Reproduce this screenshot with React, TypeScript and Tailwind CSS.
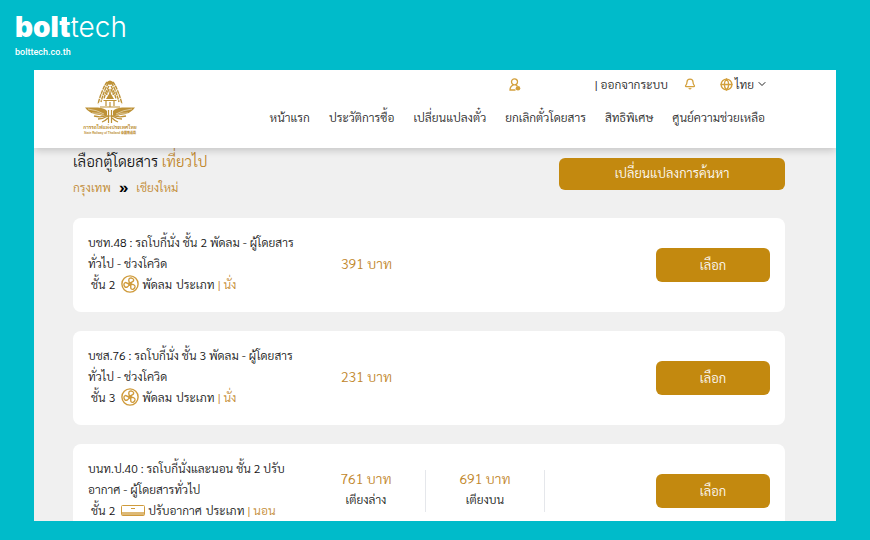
import { Bell, ChevronDown, Globe } from 'lucide-react';

type Price = { amount: string; berth?: string };

type Coach = {
  id: string;
  title: string[];
  travelClass: string;
  cooling: 'fan' | 'air';
  kind: string;
  prices: Price[];
};

const navItems = [
  'หน้าแรก',
  'ประวัติการซื้อ',
  'เปลี่ยนแปลงตั๋ว',
  'ยกเลิกตั๋วโดยสาร',
  'สิทธิพิเศษ',
  'ศูนย์ความช่วยเหลือ',
];

const coaches: Coach[] = [
  {
    id: '48',
    title: ['บชท.48 : รถโบกี้นั่ง ชั้น 2 พัดลม - ผู้โดยสาร', 'ทั่วไป - ช่วงโควิด'],
    travelClass: 'ชั้น 2',
    cooling: 'fan',
    kind: 'นั่ง',
    prices: [{ amount: '391 บาท' }],
  },
  {
    id: '76',
    title: ['บชส.76 : รถโบกี้นั่ง ชั้น 3 พัดลม - ผู้โดยสาร', 'ทั่วไป - ช่วงโควิด'],
    travelClass: 'ชั้น 3',
    cooling: 'fan',
    kind: 'นั่ง',
    prices: [{ amount: '231 บาท' }],
  },
  {
    id: '40',
    title: ['บนท.ป.40 : รถโบกี้นั่งและนอน ชั้น 2 ปรับ', 'อากาศ - ผู้โดยสารทั่วไป'],
    travelClass: 'ชั้น 2',
    cooling: 'air',
    kind: 'นอน',
    prices: [
      { amount: '761 บาท', berth: 'เตียงล่าง' },
      { amount: '691 บาท', berth: 'เตียงบน' },
    ],
  },
];

function BrandBar() {
  return (
    <div className="h-[70px] shrink-0 px-[15px] pt-[9px] text-white">
      <div className="font-['Inter',sans-serif] text-[28px] leading-[36px]">
        <span className="font-black">
          bol
          <span className="relative">
            t<span className="absolute top-[7px] left-[3px] h-[6px] w-[5px] bg-white" />
            <span className="absolute top-[7px] left-[8px] h-[5px] w-[5px] bg-[#00bbca]" />
          </span>
        </span>
        <span className="font-light">tech</span>
      </div>
      <a href="#" className="block font-['Roboto',sans-serif] text-[9px] leading-[14px] font-medium">
        bolttech.co.th
      </a>
    </div>
  );
}

function RailwayLogo() {
  return (
    <a href="#" aria-label="การรถไฟแห่งประเทศไทย" className="flex w-[58px] flex-col items-center text-[#bd9136]">
      <svg viewBox="0 0 52 44" className="h-[44px] w-[52px]" fill="none" stroke="currentColor">
        <path d="M22 3 Q26 -2 30 3 L26 5 Z" fill="currentColor" stroke="none" />
        {['', 'matrix(-1 0 0 1 52 0)'].map((flip) => (
          <g key={flip} transform={flip}>
            <path
              d="M23 2 Q18 9 14 24 M24.500 3 Q20 10 17 22 M25 6 Q21.500 12 20 19 M25 9 L22.500 15"
              strokeWidth="1.4"
              strokeDasharray="4 0.7"
            />
            <path d="M1 27.500 H14 Q21 28 23 31 V35 Q20 37 16 35 Q5 34 1 27.500Z" fill="currentColor" stroke="none" />
            <path d="M4 29 Q13 30 20 34 M8 33 Q14 32 21 36" stroke="white" strokeWidth="0.5" />
            <path d="M10 36 Q18 38 23 35 M14 39 Q19 39 24 36 M18 42 Q21 41 24 38" strokeWidth="1.3" />
          </g>
        ))}
        <path d="M26 8 L27 14 L30 19 H22 L25 14 Z" fill="currentColor" stroke="none" />
        <path d="M19.500 20.500 H32.500 M22 20 V26 M30 20 V26 M26 22 V27 M16 27 H36" strokeWidth="1.2" />
        <path d="M24.500 30 V43 M27.500 30 V43 M23 36 H29" strokeWidth="1.2" />
      </svg>
      <span className="text-[5px] leading-[7px] font-bold whitespace-nowrap">การรถไฟแห่งประเทศไทย</span>
      <span className="font-['Liberation_Sans','Noto_Sans_CJK_SC',sans-serif] text-[3px] leading-[5px] font-bold whitespace-nowrap">
        State Railway of Thailand <b>泰国铁道局</b>
      </span>
    </a>
  );
}

function UserIcon() {
  return (
    <svg viewBox="0 0 12 13" className="h-[13px] w-[12px] text-[#d3a03c]" fill="none" stroke="currentColor" strokeWidth="1.3">
      <circle cx="5.500" cy="3.800" r="3" />
      <path d="M6.500 12 H1 C1 9 2.500 7.500 4.500 6.800 M6.500 6.800 L8.500 8" />
      <circle cx="9" cy="10.200" r="2.300" fill="currentColor" stroke="none" />
    </svg>
  );
}

function FanIcon() {
  return (
    <svg viewBox="0 0 18 18" className="h-[18px] w-[18px]" fill="none" stroke="currentColor" strokeWidth="1.4">
      <circle cx="9" cy="9" r="8.100" />
      {[15, 135, 255].map((angle) => (
        <path
          key={angle}
          transform={`rotate(${angle} 9 9)`}
          d="M9 8.500 C6.800 7 6 4.500 7.500 3.400 C9 2.400 11.600 2.900 11.600 4.700 C11.600 6.200 9.800 6.300 9 8.500"
        />
      ))}
      <circle cx="9" cy="9" r="1.200" fill="currentColor" />
    </svg>
  );
}

function AirIcon() {
  return (
    <svg viewBox="0 0 24 11" className="h-[11px] w-[24px]" fill="none" stroke="currentColor">
      <rect x="0.500" y="0.500" width="23" height="10" rx="1" />
      <path d="M10 3.500 H14" />
      <rect x="1" y="7" width="22" height="3.500" fill="currentColor" stroke="none" opacity="0.7" />
    </svg>
  );
}

function SiteHeader() {
  return (
    <header className="relative flex h-[78px] shrink-0 justify-between bg-white pr-[68px] pl-[47px] shadow-[0_2px_8px_rgba(0,0,0,0.2)]">
      <div className="pt-[10px]">
        <RailwayLogo />
      </div>
      <div className="flex flex-col items-end text-[12px] text-[#222]">
        <div className="flex h-[28px] items-center">
          <button type="button" aria-label="บัญชีผู้ใช้" className="mr-[74px]">
            <UserIcon />
          </button>
          <a href="#">| ออกจากระบบ</a>
          <button type="button" aria-label="การแจ้งเตือน" className="mr-[24px] ml-[16px] text-[#d3a03c]">
            <Bell size={12} strokeWidth={2.5} />
          </button>
          <button type="button" className="flex items-center gap-[2px]">
            <Globe size={13} strokeWidth={2.5} className="text-[#d3a03c]" />
            ไทย
            <ChevronDown size={12} />
          </button>
        </div>
        <nav className="flex h-[38px] items-center gap-[19px] pr-[3px] whitespace-nowrap">
          {navItems.map((item) => (
            <a key={item} href="#">
              {item}
            </a>
          ))}
        </nav>
      </div>
    </header>
  );
}

function CoachCard({ coach }: { coach: Coach }) {
  return (
    <article className="flex h-[94px] shrink-0 items-center rounded-lg bg-white px-[15px] text-[12px] leading-[21px] text-[#111]">
      <div className="w-[219px] shrink-0 pb-[4px] whitespace-nowrap">
        <h2>
          {coach.title.map((line) => (
            <span key={line} className="block">
              {line}
            </span>
          ))}
        </h2>
        <div className="flex h-[21px] items-center pl-[3px]">
          <span>{coach.travelClass}</span>
          <span className="mr-[3px] ml-[6px] text-[#cf9b3c]">{coach.cooling === 'fan' ? <FanIcon /> : <AirIcon />}</span>
          <span className="mr-[4px]">{coach.cooling === 'fan' ? 'พัดลม' : 'ปรับอากาศ'}</span>
          <span className="mr-[3px]">ประเภท</span>
          <span className="text-[#bf862a]">| {coach.kind}</span>
        </div>
      </div>
      <div className="flex">
        {coach.prices.map((price) => (
          <div
            key={price.amount}
            className={`flex h-[42px] w-[119px] flex-col items-center justify-center pb-[4px] ${price.berth ? 'border-r border-gray-200' : ''}`}
          >
            <span className="text-[14px] text-[#bf862a]">{price.amount}</span>
            {price.berth && <span>{price.berth}</span>}
          </div>
        ))}
      </div>
      <button type="button" className="ml-auto h-[34px] w-[114px] rounded-md bg-[#c3890f] pb-[2px] text-[13px] text-white">
        เลือก
      </button>
    </article>
  );
}

export default function App() {
  return (
    <div
      lang="th"
      className="flex h-screen flex-col overflow-hidden bg-[#00bbca] font-['Sarabun','Noto_Sans','Noto_Sans_Thai_Looped',sans-serif] font-light"
    >
      <BrandBar />
      <div className="mx-[34px] mb-[19px] flex min-h-0 flex-1 flex-col overflow-hidden bg-[#f0f0f0]">
        <SiteHeader />
        <main className="flex flex-col gap-[19px] pr-[51px] pl-[39px]">
          <div className="flex h-[51px] items-start justify-between">
            <div className="whitespace-nowrap">
              <h1 className="text-[15px] leading-[26px] text-[#111]">
                เลือกตู้โดยสาร <span className="text-[#bf862a]">เที่ยวไป</span>
              </h1>
              <p className="flex items-center text-[12px] leading-[26px] text-[#bf862a]">
                กรุงเทพ
                <span className="mx-[8px] text-[16px] font-bold text-black">»</span>
                เชียงใหม่
              </p>
            </div>
            <button type="button" className="mt-[10px] h-[32px] w-[226px] rounded-md bg-[#c3890f] pb-[2px] text-[13px] text-white">
              เปลี่ยนแปลงการค้นหา
            </button>
          </div>
          {coaches.map((coach) => (
            <CoachCard key={coach.id} coach={coach} />
          ))}
        </main>
      </div>
    </div>
  );
}
